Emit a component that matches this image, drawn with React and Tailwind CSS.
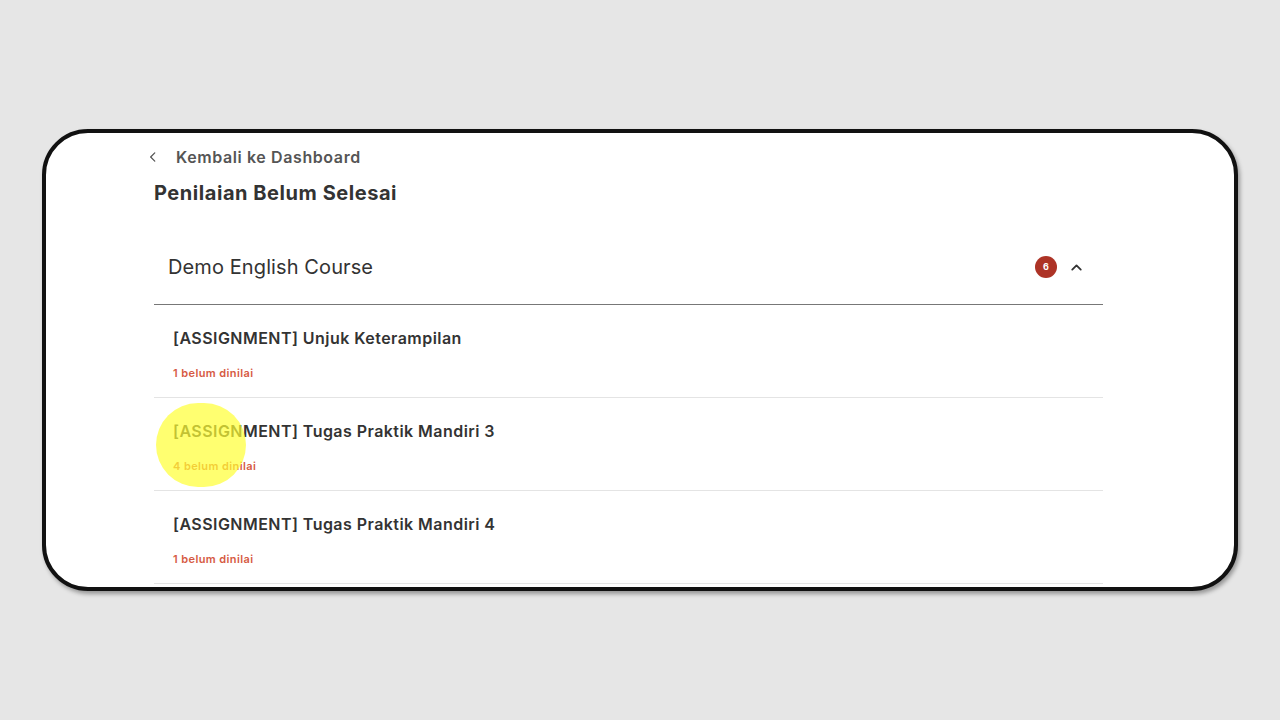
import React from "react";

const items = [
    { title: "[ASSIGNMENT] Unjuk Keterampilan", pending: 1 },
    { title: "[ASSIGNMENT] Tugas Praktik Mandiri 3", pending: 4 },
    { title: "[ASSIGNMENT] Tugas Praktik Mandiri 4", pending: 1 },
];

const ChevronLeft = () => (
    <svg width="14" height="14" viewBox="0 0 24 24" fill="none" stroke="#555" strokeWidth="2.2" strokeLinecap="round" strokeLinejoin="round">
        <path d="M15 5l-7 7 7 7" />
    </svg>
);

const ChevronUp = () => (
    <svg width="17" height="17" viewBox="0 0 24 24" fill="none" stroke="#333" strokeWidth="2.6" strokeLinecap="round" strokeLinejoin="round">
        <path d="M6 15l6-6 6 6" />
    </svg>
);

const App = () => {
    return (
        <div className="w-full h-[720px] bg-[#e6e6e6] pt-[129px] px-[42px] overflow-hidden" style={{ fontFamily: "Inter, 'Noto Sans', sans-serif" }}>
            <div className="relative h-[462px] bg-white border-[4px] border-[#111] rounded-[46px] overflow-hidden shadow-[2px_3px_4px_rgba(0,0,0,0.35)]">
                <div className="ml-[108px] w-[949px]">
                    <div className="flex items-center gap-[16px] pt-[12px] -ml-[8px]">
                        <ChevronLeft />
                        <span className="text-[16px] font-semibold text-[#555] tracking-[0.6px]">Kembali ke Dashboard</span>
                    </div>
                    <h1 className="mt-[9px] text-[20px] font-bold text-[#333] tracking-[0.55px]">Penilaian Belum Selesai</h1>

                    <div className="mt-[30px] flex items-center justify-between h-[67px] pb-[8px] pl-[14px] pr-[18px] border-b border-[#777]">
                        <span className="text-[20px] text-[#333] tracking-[0.1px]">Demo English Course</span>
                        <div className="flex items-center gap-[11px]">
                            <span className="w-[22px] h-[22px] rounded-full bg-[#ad3326] text-white text-[9px] font-bold flex items-center justify-center">6</span>
                            <ChevronUp />
                        </div>
                    </div>

                    {items.map((item) => (
                        <div key={item.title} className="h-[93px] border-b border-[#e4e4e4] pl-[19px] pt-[22px]">
                            <div className="text-[16px] font-semibold text-[#333] leading-[22px] tracking-[0.45px]">{item.title}</div>
                            <div className="mt-[17px] text-[11px] font-semibold text-[#d65a43] leading-[14px] tracking-[0.4px]">{item.pending} belum dinilai</div>
                        </div>
                    ))}
                </div>

                <div className="absolute left-[110px] top-[270px] w-[90px] h-[84px] rounded-full bg-[#ffff33]/70 pointer-events-none" />
            </div>
        </div>
    );
};

export default App;
